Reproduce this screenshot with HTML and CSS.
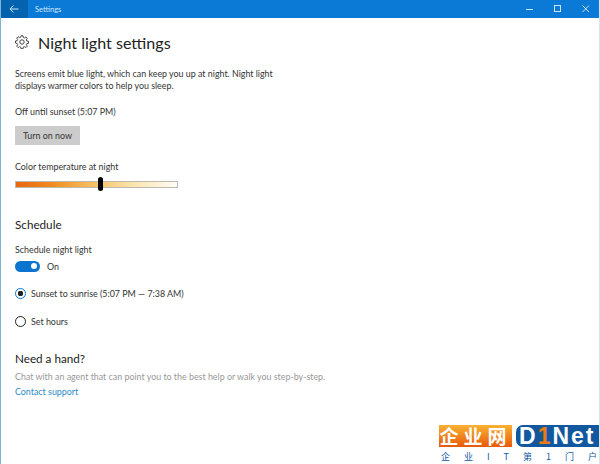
FILE: index.html
```html
<!DOCTYPE html>
<html lang="en">
<head>
    <meta charset="UTF-8">
    <title>Settings</title>
    <link rel="stylesheet" href="styles.css">
</head>
<body>
    <div class="window">
        <div class="titlebar">
            <div class="back">
                <svg width="10" height="8" viewBox="0 0 10 8"><path d="M4.500 .5 1 4l3.500 3.500M1 4h8.500" fill="none" stroke="#cfe6f8" stroke-width="1"/></svg>
            </div>
            <span class="apptitle">Settings</span>
            <div class="controls">
                <svg width="8" height="8" viewBox="0 0 8 8"><path d="M0 4.500h7" stroke="#cfe6f8" fill="none"/></svg>
                <svg width="8" height="8" viewBox="0 0 8 8"><rect x=".5" y=".5" width="6" height="6" stroke="#cfe6f8" fill="none"/></svg>
                <svg width="8" height="8" viewBox="0 0 8 8"><path d="M.5 .5l6.500 6.500M7 .5.500 7" stroke="#cfe6f8" fill="none"/></svg>
            </div>
        </div>

        <div class="content">
            <div class="heading">
                <svg class="gear" width="14" height="14" viewBox="0 0 14 14">
                    <circle cx="7" cy="7" r="2.200" fill="none" stroke="#444" stroke-width="1"/>
                    <path d="M6 .8h2l.3 1.700 1.100.5 1.500-1 1.400 1.400-1 1.500.5 1.100 1.700.3v2l-1.700.3-.5 1.100 1 1.500-1.400 1.400-1.500-1-1.100.5-.3 1.700H6l-.3-1.700-1.100-.5-1.500 1-1.400-1.400 1-1.500-.5-1.100L.5 8V6l1.700-.3.5-1.100-1-1.500L3.100 1.700l1.500 1 1.100-.5z" fill="none" stroke="#444" stroke-width="1"/>
                </svg>
                <h1>Night light settings</h1>
            </div>

            <p class="intro">Screens emit blue light, which can keep you up at night. Night light<br>displays warmer colors to help you sleep.</p>
            <p class="status">Off until sunset (5:07 PM)</p>
            <button class="btn">Turn on now</button>

            <p class="label">Color temperature at night</p>
            <div class="slider">
                <div class="thumb"></div>
            </div>

            <h2 class="schedule">Schedule</h2>
            <p class="label-sm">Schedule night light</p>
            <div class="toggle-row">
                <div class="toggle"><div class="knob"></div></div>
                <span>On</span>
            </div>
            <div class="radio-row first">
                <div class="radio checked"></div>
                <span>Sunset to sunrise (5:07 PM — 7:38 AM)</span>
            </div>
            <div class="radio-row">
                <div class="radio"></div>
                <span>Set hours</span>
            </div>

            <h2 class="help">Need a hand?</h2>
            <p class="muted">Chat with an agent that can point you to the best help or walk you step-by-step.</p>
            <a class="link" href="#">Contact support</a>
        </div>

        <!-- watermark -->
        <div class="watermark">
            <div class="wm-top">
                <span class="wm-cn">企业网</span>
                <span class="wm-en">D<b>1</b>Net</span>
            </div>
            <div class="wm-sub"><span>企</span><span>业</span><span>I</span><span>T</span><span>第</span><span>1</span><span>门</span><span>户</span></div>
        </div>
    </div>
</body>
</html>
```

FILE: styles.css
```css
html, body {
    margin: 0;
    padding: 0;
}

body {
    font-family: Lato, "Open Sans", sans-serif;
    font-size: 8.900px;
    color: #333;
    background-color: #fff;
}

.window {
    position: relative;
    width: 600px;
    height: 464px;
    overflow: hidden;
    box-sizing: border-box;
    border-left: 1px solid #7db4d0;
    border-right: 1px solid #d5e6f0;
}

p {
    margin: 0;
}

.titlebar {
    display: flex;
    align-items: center;
    height: 18px;
    background-color: #0a7ad6;
    color: #cfe6f8;
    margin: 0 -1px;
}

.back {
    display: flex;
    align-items: center;
    justify-content: center;
    width: 28px;
    height: 18px;
    background-color: #0463ae;
}

.apptitle {
    margin-left: 7px;
    font-size: 7.500px;
}

.controls {
    display: flex;
    gap: 20px;
    margin-left: auto;
    margin-right: 10px;
}

.content {
    padding: 13px 0 0 14px;
}

.heading {
    display: flex;
    align-items: center;
    gap: 9px;
    height: 22px;
}

h1 {
    margin: 0;
    font-size: 16.100px;
    font-weight: 400;
    color: #222;
}

h2 {
    margin: 0;
    font-size: 11.700px;
    font-weight: 400;
    color: #222;
    line-height: 16px;
}

.intro {
    margin-top: 15px;
    line-height: 11.500px;
}

.status {
    margin-top: 15px;
    line-height: 12px;
}

.btn {
    display: block;
    width: 65px;
    height: 19px;
    margin-top: 8px;
    padding: 0;
    border: none;
    background-color: #ccc;
    color: #333;
    font-family: inherit;
    font-size: 8.900px;
}

.label {
    margin-top: 16px;
    line-height: 12px;
}

.slider {
    position: relative;
    box-sizing: border-box;
    width: 163px;
    height: 7px;
    margin-top: 8px;
    border: 1px solid #bcb9ae;
    background: linear-gradient(to right, #e8660f 0%, #f08a20 22%, #f7c063 48%, #fbe3ac 72%, #fffdf6 100%);
}

.thumb {
    position: absolute;
    left: 82px;
    top: -5px;
    width: 5px;
    height: 14px;
    border-radius: 3px;
    background-color: #000;
}

.schedule {
    margin-top: 28px;
}

.label-sm {
    margin-top: 12px;
    line-height: 12px;
}

.toggle-row {
    display: flex;
    align-items: center;
    gap: 7px;
    margin-top: 4px;
    height: 12px;
}

.toggle {
    display: flex;
    align-items: center;
    justify-content: flex-end;
    width: 25px;
    height: 11px;
    border-radius: 6px;
    background-color: #0a74cf;
}

.knob {
    width: 6px;
    height: 6px;
    margin-right: 3px;
    border-radius: 50%;
    background-color: #fff;
}

.radio-row {
    display: flex;
    align-items: center;
    gap: 5px;
    height: 12px;
    margin-top: 16px;
}

.radio-row.first {
    margin-top: 15px;
}

.radio {
    box-sizing: border-box;
    width: 11px;
    height: 11px;
    border: 1px solid #222;
    border-radius: 50%;
}

.radio.checked {
    border-color: #0a74cf;
    background: radial-gradient(circle, #222 2.500px, #fff 3px);
}

.help {
    margin-top: 23px;
}

.muted {
    margin-top: 5px;
    color: #999;
    line-height: 12px;
}

.link {
    display: block;
    margin-top: 3px;
    color: #2b8ac6;
    text-decoration: none;
    line-height: 12px;
}

.watermark {
    position: absolute;
    right: 0;
    bottom: 0;
    width: 160px;
    height: 39px;
    font-family: "Noto Sans CJK SC", sans-serif;
}

.wm-top {
    display: flex;
    height: 22px;
    gap: 4px;
}

.wm-cn {
    width: 73px;
    background: linear-gradient(to bottom, #f9b233, #e8590c);
    color: #fff;
    font-size: 19px;
    line-height: 22px;
    font-weight: 700;
    text-align: center;
    letter-spacing: 5px;
}

.wm-en {
    flex: 1;
    padding-left: 3px;
    background-color: #11589f;
    color: #fff;
    border-radius: 7px 0 0 7px;
    font-family: "Liberation Sans", sans-serif;
    font-size: 23px;
    line-height: 22px;
    font-weight: 700;
    letter-spacing: 2px;
}

.wm-en b {
    color: #ee7a13;
}

.wm-sub {
    display: flex;
    justify-content: space-between;
    margin-top: 3px;
    padding: 0 2px;
    color: #11589f;
    font-size: 9px;
    line-height: 13px;
}
```
